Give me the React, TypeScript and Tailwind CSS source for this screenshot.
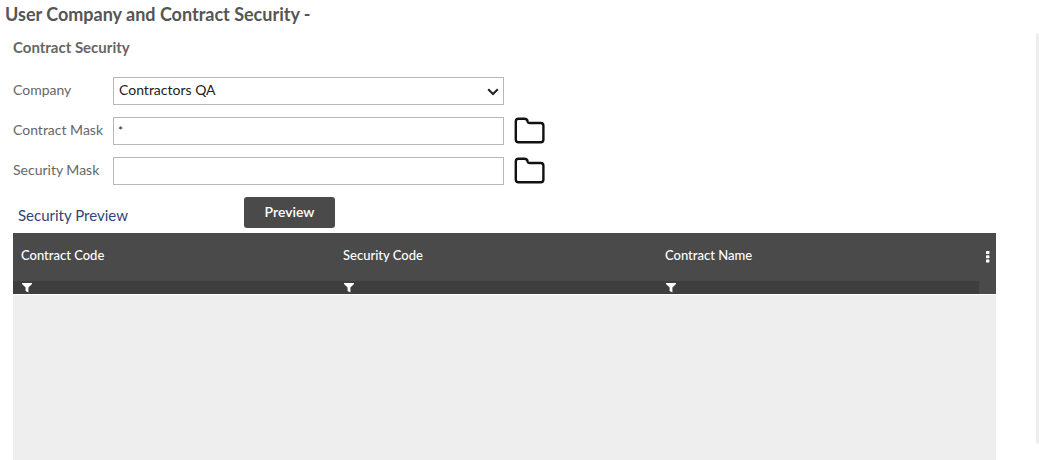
import { useState } from 'react';

const companies = ['Contractors QA'];
const columns = ['Contract Code', 'Security Code', 'Contract Name'];

function FolderIcon() {
  return (
    <svg width="32" height="28" viewBox="0 0 32 28" fill="none" stroke="#111111" strokeWidth="2.4" strokeLinejoin="round">
      <path d="M1.8 4.4 Q1.8 1.8 4.6 1.8 H10.4 Q13.2 1.8 13.6 4.4 Q13.9 6 15.8 6 H26.8 Q29.4 6 29.4 8.8 V22.4 Q29.4 25.2 26.8 25.2 H4.6 Q1.8 25.2 1.8 22.4 Z" />
    </svg>
  );
}

function FilterIcon() {
  return (
    <svg width="10" height="10" viewBox="0 0 10 10" fill="#ffffff">
      <path d="M0 0 H10 V1 L6.4 4.6 V9.6 L3.6 8 V4.6 L0 1 Z" />
    </svg>
  );
}

function MenuIcon() {
  return (
    <svg width="4" height="12" viewBox="0 0 4 12" fill="#ffffff">
      <rect x="0" y="0" width="3.4" height="3" rx="0.6" />
      <rect x="0" y="4.3" width="3.4" height="3" rx="0.6" />
      <rect x="0" y="8.6" width="3.4" height="3" rx="0.6" />
    </svg>
  );
}

export default function App() {
  const [company, setCompany] = useState(companies[0]);
  const [contractMask, setContractMask] = useState('*');
  const [securityMask, setSecurityMask] = useState('');

  return (
    <div className="flex min-h-screen flex-col bg-white font-['Lato',sans-serif] text-sm text-[#666666]">
      <h1 className="px-[5px] pt-[2px] text-lg leading-6 font-bold text-[#555555]">
        User Company and Contract Security -
      </h1>

      <div className="flex flex-1">
        <main className="mr-10 ml-[13px] flex flex-1 flex-col pt-[11px]">
          <h2 className="mb-5 text-[15px] leading-5 font-bold">Contract Security</h2>

          <form onSubmit={(e) => e.preventDefault()}>
            {/* Masks */}
            <div className="flex flex-col gap-3">
              <div className="flex h-7">
                <label htmlFor="company" className="w-[100px] pt-[3px] leading-5">Company</label>
                <div className="relative w-[391px]">
                  <select
                    id="company"
                    value={company}
                    onChange={(e) => setCompany(e.target.value)}
                    className="h-7 w-full appearance-none border border-[#b8b8b8] bg-white px-[5px] pb-[2px] text-sm text-[#222222]"
                  >
                    {companies.map((name) => (
                      <option key={name}>{name}</option>
                    ))}
                  </select>
                  <svg
                    className="pointer-events-none absolute top-[11px] right-[5px]"
                    width="12"
                    height="8"
                    viewBox="0 0 12 8"
                    fill="none"
                    stroke="#222222"
                    strokeWidth="2"
                  >
                    <path d="M1.2 1.2 L6 6 L10.8 1.2" />
                  </svg>
                </div>
              </div>
              <div className="flex h-7">
                <label htmlFor="contract-mask" className="w-[100px] pt-[3px] leading-5">Contract Mask</label>
                <input
                  id="contract-mask"
                  type="text"
                  value={contractMask}
                  onChange={(e) => setContractMask(e.target.value)}
                  className="w-[391px] border border-[#b8b8b8] px-1 text-xs text-[#222222]"
                />
                <button type="button" aria-label="Browse contracts" className="ml-[10px]">
                  <FolderIcon />
                </button>
              </div>
              <div className="flex h-7">
                <label htmlFor="security-mask" className="w-[100px] pt-[3px] leading-5">Security Mask</label>
                <input
                  id="security-mask"
                  type="text"
                  value={securityMask}
                  onChange={(e) => setSecurityMask(e.target.value)}
                  className="w-[391px] border border-[#b8b8b8] px-1 text-xs text-[#222222]"
                />
                <button type="button" aria-label="Browse security codes" className="ml-[10px]">
                  <FolderIcon />
                </button>
              </div>
            </div>

            <div className="mt-3 mb-[5px] flex">
              <h3 className="w-[231px] pt-2 pl-[5px] text-[15px] leading-5 text-[#34427a]">Security Preview</h3>
              <button type="submit" className="h-[31px] w-[91px] rounded-[3px] bg-[#4a4a4a] pb-[2px] font-semibold text-white">
                Preview
              </button>
            </div>
          </form>

          {/* Preview grid */}
          <div className="flex flex-1 flex-col bg-[#eeeeee]">
            <table className="w-full table-fixed border-b border-white bg-[#4a4a4a] text-left text-[13px] text-white">
              <thead>
                <tr className="h-12">
                  {columns.map((column) => (
                    <th key={column} className="px-2 pb-1 font-medium">{column}</th>
                  ))}
                  <th className="w-[17px]">
                    <button type="button" aria-label="Column menu" className="block pl-[7px]">
                      <MenuIcon />
                    </button>
                  </th>
                </tr>
                <tr className="h-[13px]">
                  {columns.map((column) => (
                    <td key={column} className="bg-[#3e3e3e] pl-[9px]">
                      <button type="button" aria-label={`Filter ${column}`} className="block pt-[2px]">
                        <FilterIcon />
                      </button>
                    </td>
                  ))}
                  <td />
                </tr>
              </thead>
            </table>
          </div>
        </main>

        <div className="mt-[7px] mb-4 w-[3px] rounded-full bg-[#eeeeee]" />
      </div>
    </div>
  );
}
